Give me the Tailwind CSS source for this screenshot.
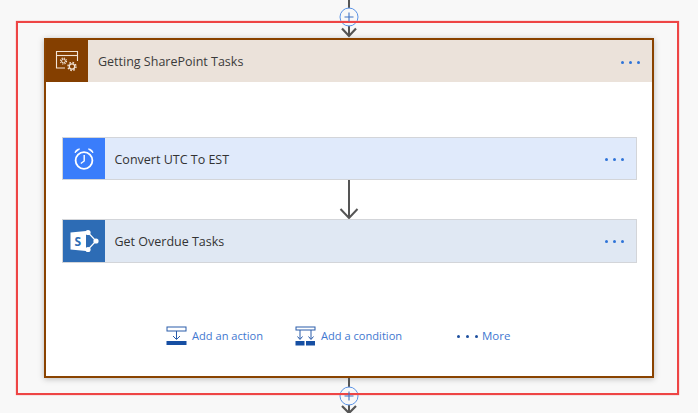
<!doctype html>
<html lang="en">
<head>
  <meta charset="UTF-8">
  <title>Getting SharePoint Tasks</title>
  <script src="https://cdn.jsdelivr.net/npm/@tailwindcss/browser@4"></script>
</head>
<body>
  <div class="relative w-[698px] h-[413px] overflow-hidden bg-[#f8f8f8] flex flex-col items-center font-['Open_Sans','Noto_Sans',sans-serif] text-[#333]">

    <!-- connector above -->
    <svg class="w-[24px] h-[38px] shrink-0" viewBox="0 0 24 38" fill="none">
      <path d="M12 0V36" stroke="#555" stroke-width="2"/>
      <path d="M5 28.5L12 36L19 28.5" stroke="#555" stroke-width="2.2"/>
      <circle cx="12" cy="17" r="9" fill="#f8f8f8" stroke="#5b93e6" stroke-width="1"/>
    </svg>

    <!-- scope card -->
    <div class="w-[610px] h-[340px] shrink-0 flex flex-col bg-white border-2 border-[#8a4300] shadow-[0_1px_6px_rgba(0,0,0,0.25)]">
      <div class="h-[42px] flex items-center bg-[#ebe2da] shrink-0">
        <div class="w-[42px] h-full bg-[#843f00] flex items-center justify-center">
          <svg class="w-[24px] h-[22px]" viewBox="0 0 24 22" fill="none" stroke="#f3e4d6" stroke-width="1.1">
            <path d="M10 18H1.5V1.5H22.5V11"/>
            <path d="M1.5 5.5H22.5"/>
            <circle cx="8.5" cy="11" r="3" stroke-width="1.2" stroke-dasharray="1.2 1.16"/>
            <circle cx="8.5" cy="11" r="1.9" fill="#843f00" stroke-width="1"/>
            <circle cx="17" cy="16.5" r="4" stroke-width="1.4" stroke-dasharray="1.6 1.54"/>
            <circle cx="17" cy="16.5" r="2.7" fill="#843f00" stroke-width="1.3"/>
          </svg>
        </div>
        <span class="ml-[10px] pt-[2px] text-[12.5px] leading-none text-[#3b3b3b]">Getting SharePoint Tasks</span>
        <span class="ml-auto mr-[12px] pt-[2px] flex gap-[5px]">
          <i class="w-[3px] h-[3px] rounded-full bg-[#2f74d8]"></i>
          <i class="w-[3px] h-[3px] rounded-full bg-[#2f74d8]"></i>
          <i class="w-[3px] h-[3px] rounded-full bg-[#2f74d8]"></i>
        </span>
      </div>

      <div class="flex-1 flex flex-col items-center pt-[55px]">
        <!-- Convert UTC To EST -->
        <div class="w-[575px] h-[43px] flex items-center bg-[#e0eafb] border border-[#d3d5d9]">
          <div class="w-[42px] h-full bg-[#3a7dfb] flex items-center justify-center shrink-0">
            <svg class="w-[22px] h-[24px]" viewBox="0 0 22 24" fill="none" stroke="#fff">
              <circle cx="11" cy="13.5" r="8.4" stroke-width="1.8"/>
              <path d="M11.2 8V14L7.8 16.5" stroke-width="1.4"/>
              <path d="M2 5.8C2.3 3.4 4.3 1.8 6.6 2Z" fill="#fff" stroke-width="0.9"/>
              <path d="M20 5.8C19.7 3.4 17.7 1.8 15.4 2Z" fill="#fff" stroke-width="0.9"/>
            </svg>
          </div>
          <span class="ml-[10px] pt-[3px] text-[12.5px] leading-none text-[#333]">Convert UTC To EST</span>
          <span class="ml-auto mr-[12px] pt-[1px] flex gap-[5px]">
            <i class="w-[3px] h-[3px] rounded-full bg-[#2f74d8]"></i>
            <i class="w-[3px] h-[3px] rounded-full bg-[#2f74d8]"></i>
            <i class="w-[3px] h-[3px] rounded-full bg-[#2f74d8]"></i>
          </span>
        </div>

        <svg class="w-[24px] h-[39px] shrink-0" viewBox="0 0 24 39" fill="none">
          <path d="M12 0V38" stroke="#555" stroke-width="2"/>
          <path d="M3.5 29L12 38L20.5 29" stroke="#555" stroke-width="2"/>
        </svg>

        <!-- Get Overdue Tasks -->
        <div class="w-[575px] h-[44px] flex items-center bg-[#e0e8f3] border border-[#d3d5d9]">
          <div class="w-[42px] h-full bg-[#2d6cb5] flex items-center justify-center shrink-0">
            <svg class="w-[30px] h-[24px]" viewBox="0 0 30 24" fill="none">
              <path d="M19 3.5L27 12L19 20.5" stroke="#fff" stroke-width="1.2"/>
              <circle cx="19" cy="3.5" r="2.6" fill="#fff"/>
              <circle cx="27" cy="12" r="2.6" fill="#fff"/>
              <circle cx="19" cy="20.5" r="2.6" fill="#fff"/>
              <path d="M1.5 3.5L17 2V22L1.5 20.5Z" fill="#fff"/>
              <text x="5.5" y="16.5" font-size="12" font-weight="700" fill="#2d6cb5" font-family="Open Sans">S</text>
            </svg>
          </div>
          <span class="ml-[10px] pt-[3px] text-[12.5px] leading-none text-[#333]">Get Overdue Tasks</span>
          <span class="ml-auto mr-[12px] pt-[1px] flex gap-[5px]">
            <i class="w-[3px] h-[3px] rounded-full bg-[#2f74d8]"></i>
            <i class="w-[3px] h-[3px] rounded-full bg-[#2f74d8]"></i>
            <i class="w-[3px] h-[3px] rounded-full bg-[#2f74d8]"></i>
          </span>
        </div>

        <!-- footer actions -->
        <div class="w-full mt-[63px] pl-[120px] flex items-center text-[11.1px] leading-none text-[#3f78d0]">
          <svg class="w-[21px] h-[20px] shrink-0" viewBox="0 0 21 20" fill="none">
            <rect x="1" y="1" width="19" height="4" stroke="#2a5caa"/>
            <path d="M10.5 5V13M7 10L10.5 13.5L14 10" stroke="#2a5caa"/>
            <rect x="0.5" y="15" width="20" height="4" fill="#164fa3"/>
          </svg>
          <span class="ml-[5px] w-[103px]">Add an action</span>
          <svg class="w-[21px] h-[20px] shrink-0" viewBox="0 0 21 20" fill="none">
            <rect x="1" y="1" width="19" height="3" stroke="#2a5caa"/>
            <path d="M5 4V13M2.5 10.5L5 13.5L7.5 10.5M16 4V13M13.5 10.5L16 13.5L18.5 10.5" stroke="#2a5caa"/>
            <rect x="0.5" y="15" width="9" height="4.5" fill="#164fa3"/>
            <rect x="11" y="15" width="9" height="4.5" fill="#164fa3"/>
          </svg>
          <span class="ml-[5px] w-[136px]">Add a condition</span>
          <span class="w-[22px] flex gap-[6px] shrink-0">
            <i class="w-[3px] h-[3px] rounded-full bg-[#1d4f9e]"></i>
            <i class="w-[3px] h-[3px] rounded-full bg-[#1d4f9e]"></i>
            <i class="w-[3px] h-[3px] rounded-full bg-[#1d4f9e]"></i>
          </span>
          <span class="ml-[3px] text-[11.5px]">More</span>
        </div>
      </div>
    </div>

    <!-- connector below -->
    <svg class="w-[24px] h-[35px] shrink-0" viewBox="0 0 24 35" fill="none">
      <path d="M12 0V35" stroke="#555" stroke-width="2"/>
      <path d="M5 28L12 35L19 28" stroke="#555" stroke-width="2.2"/>
      <circle cx="12" cy="18" r="9" fill="#f8f8f8" stroke="#5b93e6" stroke-width="1"/>
    </svg>

    <!-- red highlight drawn over the flow -->
    <div class="absolute left-[16px] top-[21px] w-[663px] h-[374px] border-2 border-[#ee4545] shadow-[0_0_1px_rgba(238,69,69,0.7)] pointer-events-none"></div>
    <svg class="absolute left-[337px] top-[0px] w-[24px] h-[38px] pointer-events-none" viewBox="0 0 24 38" fill="none">
      <path d="M7.5 17H16.5M12 12.5V21.5" stroke="#3f72c4" stroke-width="1.1"/>
    </svg>
    <svg class="absolute left-[337px] top-[378px] w-[24px] h-[35px] pointer-events-none" viewBox="0 0 24 35" fill="none">
      <path d="M7.5 18H16.5M12 13.5V22.5" stroke="#3f72c4" stroke-width="1.1"/>
    </svg>
  </div>
</body>
</html>
